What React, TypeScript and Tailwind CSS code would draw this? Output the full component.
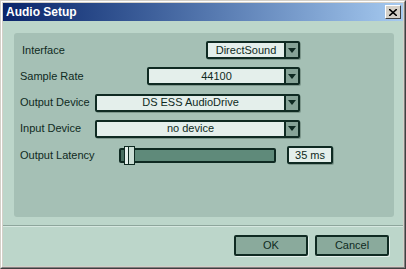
import React from 'react';

const font = { fontFamily: '"Liberation Sans", Arial, sans-serif' };

function Arrow(): JSX.Element {
    return (
        <div className="w-[14px] h-full border-l-2 border-[#0f2a22] bg-[#86a397] flex items-center justify-center">
            <svg width="8" height="5" viewBox="0 0 8 5">
                <polygon points="0,0 8,0 4,5" fill="#0f2a22" />
            </svg>
        </div>
    );
}

function Combo(props: { value: string; width: string }): JSX.Element {
    return (
        <div
            className={
                'ml-auto h-[18px] flex border-2 border-[#0f2a22] rounded-[2px] bg-[#e4efeb] shadow-[1px_1px_0_#7d978c] ' +
                props.width
            }
        >
            <div className="flex-1 flex items-center justify-center text-[11px] text-[#0f2a22] leading-none">
                {props.value}
            </div>
            <Arrow />
        </div>
    );
}

function Row(props: { label: string; children: React.ReactNode; indent?: boolean }): JSX.Element {
    return (
        <div className="flex items-center h-[18px] mr-[94px]">
            <span className={'text-[11px] text-[#0f2a22] leading-none ' + (props.indent ? 'ml-[8px]' : 'ml-[6px]')}>
                {props.label}
            </span>
            {props.children}
        </div>
    );
}

function Button(props: { label: string }): JSX.Element {
    return (
        <div className="w-[74px] h-[21px] flex items-center justify-center border-2 border-[#0f2a22] rounded-[2px] bg-[#8aaa9c] text-[11px] text-[#0f2a22] shadow-[1px_1px_0_#e4efeb]">
            {props.label}
        </div>
    );
}

export default function App(): JSX.Element {
    return (
        <div
            style={font}
            className="w-[406px] h-[269px] flex flex-col bg-[#d4d0c8] border-t border-l border-t-[#d4d0c8] border-l-[#d4d0c8] border-r border-b border-r-[#404040] border-b-[#404040] select-none"
        >
            <div className="flex-1 flex flex-col border-t border-l border-t-white border-l-white border-r border-b border-r-[#808080] border-b-[#808080] p-[1px]">
                {/* title bar */}
                <div className="h-[18px] flex items-center pl-[3px] pr-[2px] bg-gradient-to-r from-[#0a246a] to-[#a6caf0]">
                    <span className="text-white font-bold text-[12px] leading-none">Audio Setup</span>
                    <div className="ml-auto w-[16px] h-[14px] bg-[#d4d0c8] border border-t-white border-l-white border-r-[#404040] border-b-[#404040] flex items-center justify-center">
                        <svg width="8" height="7" viewBox="0 0 8 7">
                            <path d="M0 0 L8 7 M8 0 L0 7" stroke="#000" strokeWidth="1.6" />
                        </svg>
                    </div>
                </div>
                {/* body */}
                <div className="flex-1 flex flex-col bg-[#bcd6ca]">
                    <div className="ml-[11px] mr-[9px] mt-[12px] h-[184px] rounded-[3px] bg-[#a5c0b5] pt-[8px] flex flex-col gap-[8.25px]">
                        <Row label="Interface" indent>
                            <Combo value="DirectSound" width="w-[94px]" />
                        </Row>
                        <Row label="Sample Rate">
                            <Combo value="44100" width="w-[153px]" />
                        </Row>
                        <Row label="Output Device">
                            <Combo value="DS ESS AudioDrive" width="w-[205px]" />
                        </Row>
                        <Row label="Input Device">
                            <Combo value="no device" width="w-[205px]" />
                        </Row>
                        <div className="flex items-center h-[18px]">
                            <span className="ml-[6px] w-[99px] text-[11px] text-[#0f2a22] leading-none">Output Latency</span>
                            <div className="relative w-[157px] h-[15px] border-2 border-[#0f2a22] rounded-[2px] bg-[#5f8a7a]">
                                <div className="absolute left-[0px] top-0 bottom-0 w-[5px] bg-[#486e60]" />
                                <div className="absolute left-[3px] top-[-4px] w-[11px] h-[19px] border border-[#0f2a22] bg-[#c9ddd4] flex">
                                    <div className="w-[4px] h-full border-r border-[#0f2a22] bg-[#e4efeb]" />
                                </div>
                            </div>
                            <div className="ml-[11px] w-[46px] h-[18px] flex items-center justify-center border-2 border-[#0f2a22] rounded-[2px] bg-[#e4efeb] text-[11px] text-[#0f2a22] shadow-[1px_1px_0_#7d978c]">
                                35 ms
                            </div>
                        </div>
                    </div>
                    <div className="mt-[8px] h-[2px] border-t border-t-[#8ea69c] border-b border-b-[#d6e8e0]" />
                    <div className="flex justify-end gap-[7px] pr-[14px] mt-[8px]">
                        <Button label="OK" />
                        <Button label="Cancel" />
                    </div>
                </div>
            </div>
        </div>
    );
}
